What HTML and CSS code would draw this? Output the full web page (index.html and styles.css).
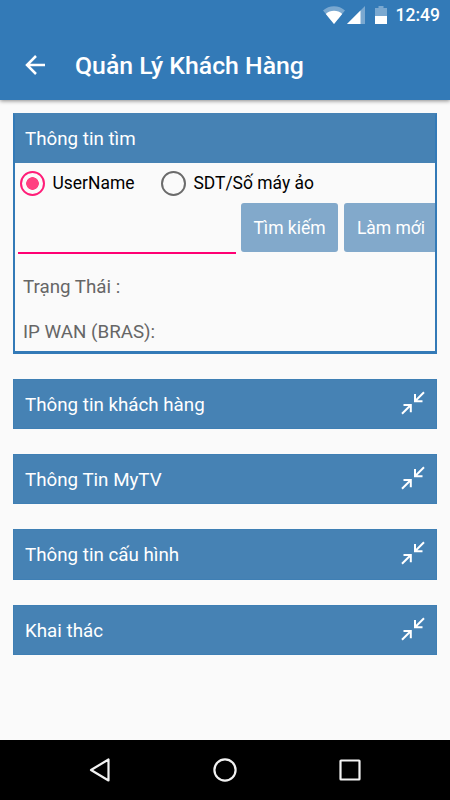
FILE: index.html
```html
<!DOCTYPE html>
<html lang="vi">
<head>
    <meta charset="UTF-8">
    <meta name="viewport" content="width=device-width, initial-scale=1.0">
    <title>Quản Lý Khách Hàng</title>
    <link rel="stylesheet" href="styles.css">
</head>
<body>
    <header>
        <div class="status-bar">
            <svg class="wifi" width="22" height="18" viewBox="0 0 22 18">
                <path d="M0 4.5C6-1.2 16-1.2 22 4.5L11 18z" fill="#fff" fill-opacity="0.35"/>
                <path d="M2.8 8C7 3.8 15 3.8 19.2 8L11 18z" fill="#fff"/>
            </svg>
            <svg class="signal" width="18" height="18" viewBox="0 0 18 18">
                <path d="M18 0V18H0z" fill="#fff" fill-opacity="0.35"/>
                <path d="M13.5 4.5V18H0z" fill="#fff"/>
            </svg>
            <svg class="battery" width="12" height="18" viewBox="0 0 12 18">
                <path d="M0 2H3.5V0H8.5V2H12V10H0z" fill="#fff" fill-opacity="0.35"/>
                <path d="M0 10H12V18H0z" fill="#fff"/>
            </svg>
            <span class="clock">12:49</span>
        </div>
        <div class="toolbar">
            <svg class="back" width="20" height="20" viewBox="0 0 20 20">
                <path d="M20 10H2M11 1L2 10L11 19" fill="none" stroke="#fff" stroke-width="2.5"/>
            </svg>
            <h1>Quản Lý Khách Hàng</h1>
        </div>
    </header>

    <main class="main-content">
        <section class="search-panel">
            <div class="panel-header">Thông tin tìm</div>
            <div class="panel-body">
                <div class="radio-group">
                    <label class="radio"><input type="radio" name="searchType" checked>UserName</label>
                    <label class="radio"><input type="radio" name="searchType">SDT/Số máy ảo</label>
                </div>
                <div class="search-row">
                    <input type="text" class="search-input">
                    <button class="btn">Tìm kiếm</button>
                    <button class="btn btn-reset">Làm mới</button>
                </div>
                <div class="info">Trạng Thái :</div>
                <div class="info">IP WAN (BRAS):</div>
            </div>
        </section>

        <div class="section-bar">
            <span>Thông tin khách hàng</span>
            <svg class="collapse" width="24" height="24" viewBox="0 0 24 24"><path d="M23 1.2L14 10.2M14 3V10.2H21.5M1 22.8L9.8 14M2.5 14H9.8V21.2"/></svg>
        </div>
        <div class="section-bar">
            <span>Thông Tin MyTV</span>
            <svg class="collapse" width="24" height="24" viewBox="0 0 24 24"><path d="M23 1.2L14 10.2M14 3V10.2H21.5M1 22.8L9.8 14M2.5 14H9.8V21.2"/></svg>
        </div>
        <div class="section-bar">
            <span>Thông tin cấu hình</span>
            <svg class="collapse" width="24" height="24" viewBox="0 0 24 24"><path d="M23 1.2L14 10.2M14 3V10.2H21.5M1 22.8L9.8 14M2.5 14H9.8V21.2"/></svg>
        </div>
        <div class="section-bar">
            <span>Khai thác</span>
            <svg class="collapse" width="24" height="24" viewBox="0 0 24 24"><path d="M23 1.2L14 10.2M14 3V10.2H21.5M1 22.8L9.8 14M2.5 14H9.8V21.2"/></svg>
        </div>
    </main>

    <nav class="nav-bar">
        <svg width="24" height="26" viewBox="0 0 24 26"><path d="M20.5 2.5V23.5L3 13z"/></svg>
        <svg width="24" height="26" viewBox="0 0 24 26"><circle cx="12" cy="13" r="10.6"/></svg>
        <svg width="24" height="26" viewBox="0 0 24 26"><rect x="2.5" y="3.5" width="19" height="19" rx="0.5"/></svg>
    </nav>
</body>
</html>
```

FILE: styles.css
```css
* {
    box-sizing: border-box;
}
body {
    margin: 0;
    height: 100vh;
    display: flex;
    flex-direction: column;
    overflow: hidden;
    font-family: Roboto, sans-serif;
    font-size: 18.75px;
    background-color: #fafafa;
}
header {
    height: 100px;
    flex-shrink: 0;
    background-color: #337ab7;
    color: white;
    box-shadow: 0 1px 4px rgba(0, 0, 0, 0.45);
}
.status-bar {
    height: 30px;
    display: flex;
    justify-content: flex-end;
    align-items: center;
    padding-right: 10px;
}
.signal {
    margin-left: 2px;
}
.battery {
    margin: 0 9px 0 10px;
}
.clock {
    font-size: 17.5px;
    font-weight: 500;
    line-height: 32px;
}
.toolbar {
    height: 70px;
    display: flex;
    align-items: center;
    padding-left: 25px;
}
.toolbar h1 {
    margin: 1px 0 0 30px;
    font-size: 24.8px;
    font-weight: 500;
}
.main-content {
    flex: 1;
    padding: 12.5px 13px;
}
.search-panel {
    height: 241px;
    border: 2px solid #337ab7;
    border-top-color: #4682b4;
    border-bottom-width: 3px;
    margin-bottom: 25px;
}
.panel-header {
    height: 48px;
    line-height: 48px;
    padding-left: 10px;
    background-color: #4682b4;
    color: white;
}
.radio-group {
    display: flex;
    gap: 26.5px;
    height: 40px;
    padding: 1px 0 0 5px;
}
.radio {
    display: flex;
    align-items: center;
    font-size: 17.45px;
    color: black;
}
.radio input {
    appearance: none;
    width: 25px;
    height: 25px;
    margin: 0 7.5px 0 0;
    border: 2.5px solid #6b6b6b;
    border-radius: 50%;
}
.radio input:checked {
    border-color: #ff1d78;
    background: radial-gradient(circle, #ff4081 6px, transparent 6.6px);
}
.search-row {
    display: flex;
    height: 61px;
    padding-left: 3px;
    overflow: hidden;
}
.search-input {
    width: 218px;
    height: 51px;
    flex-shrink: 0;
    margin-right: 5px;
    padding: 0 4px;
    border: none;
    border-bottom: 2px solid #ff0073;
    background: transparent;
    font: inherit;
    outline: none;
}
.btn {
    flex-shrink: 0;
    width: 97px;
    height: 49px;
    margin-right: 6px;
    padding: 2px 0 0;
    border: none;
    border-radius: 3px;
    background-color: #82a9cb;
    color: white;
    font: inherit;
    font-size: 17.5px;
}
.btn-reset {
    padding-right: 3px;
}
.info {
    height: 45px;
    line-height: 47px;
    padding-left: 8px;
    color: #666;
}
.section-bar {
    height: 50.4px;
    margin-bottom: 25px;
    padding: 0 11px;
    display: flex;
    justify-content: space-between;
    align-items: center;
    background-color: #4682b4;
    border: 1px solid #3f7fb4;
    color: white;
}
.section-bar span {
    padding-top: 2px;
}
.collapse {
    margin-bottom: 2px;
    fill: none;
    stroke: white;
    stroke-width: 2;
}
.nav-bar {
    height: 60px;
    flex-shrink: 0;
    display: flex;
    justify-content: space-between;
    align-items: center;
    padding: 0 88px;
    background-color: black;
}
.nav-bar svg {
    fill: none;
    stroke: #f2f2f2;
    stroke-width: 2.2;
    stroke-linejoin: round;
}
```
